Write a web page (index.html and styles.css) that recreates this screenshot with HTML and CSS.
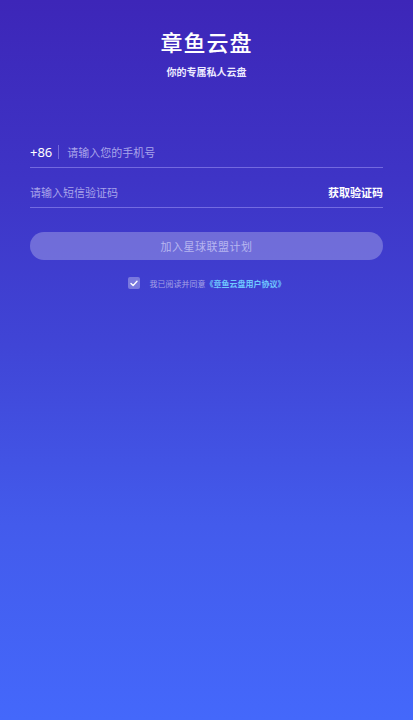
FILE: index.html
```html
<!DOCTYPE html>
<html lang="zh">
<head>
<meta charset="utf-8">
<link rel="stylesheet" href="styles.css">
</head>
<body>
<div class="page">
  <h1 class="title">章鱼云盘</h1>
  <p class="subtitle">你的专属私人云盘</p>
  <div class="form">
    <div class="row">
      <span class="code">+86</span>
      <span class="sep"></span>
      <span class="ph">请输入您的手机号</span>
    </div>
    <div class="row row2">
      <span class="ph">请输入短信验证码</span>
      <span class="get">获取验证码</span>
    </div>
    <div class="btn">加入星球联盟计划</div>
    <div class="agree">
      <span class="check"><svg width="8" height="7" viewBox="0 0 8 7"><path d="M1 3.6 L3.1 5.6 L7 1.2" fill="none" stroke="#ffffff" stroke-width="1.4" stroke-linecap="round" stroke-linejoin="round"/></svg></span>
      <span class="agree-text">我已阅读并同意</span><span class="link">《章鱼云盘用户协议》</span>
    </div>
  </div>
</div>
</body>
</html>
```
FILE: styles.css
```css
html, body {
  margin: 0;
  padding: 0;
}
body {
  width: 413px;
  height: 720px;
  overflow: hidden;
  font-family: "Noto Sans CJK SC", "Noto Sans", sans-serif;
  background: linear-gradient(180deg, #3d26b8 0%, #3e34c6 25%, #4045d6 48%, #435bec 73%, #4468fb 100%);
  color: #ffffff;
}
.page {
  display: flex;
  flex-direction: column;
  align-items: center;
  padding-top: 26px;
}
.title {
  margin: 0;
  font-size: 22px;
  line-height: 30px;
  font-weight: 500;
  letter-spacing: 1px;
}
.subtitle {
  margin: 9px 0 0;
  font-size: 10px;
  line-height: 14px;
  font-weight: 700;
  color: #eceaff;
}
.form {
  width: 353px;
  margin-top: 49px;
  display: flex;
  flex-direction: column;
}
.row {
  display: flex;
  align-items: center;
  height: 31px;
  padding-top: 8px;
  border-bottom: 1px solid rgba(180, 170, 255, 0.45);
}
.row2 {
  justify-content: space-between;
}
.code {
  font-size: 13px;
  color: #ffffff;
  font-family: "Noto Sans", sans-serif;
}
.sep {
  width: 1px;
  height: 14px;
  background: rgba(170, 160, 240, 0.5);
  margin: 0 8px 0 6px;
}
.ph {
  font-size: 11px;
  color: #a9a4ea;
}
.get {
  font-size: 11px;
  font-weight: 700;
  color: #ffffff;
}
.btn {
  margin-top: 24px;
  height: 28px;
  border-radius: 14px;
  background: rgba(255, 255, 255, 0.26);
  display: flex;
  align-items: center;
  justify-content: center;
  font-size: 11px;
  color: #b7b6f0;
  letter-spacing: 0.5px;
}
.agree {
  margin-top: 17px;
  height: 12px;
  display: flex;
  align-items: center;
  justify-content: center;
  font-size: 8px;
}
.check {
  width: 12px;
  height: 12px;
  border-radius: 2px;
  background: rgba(255, 255, 255, 0.3);
  display: flex;
  align-items: center;
  justify-content: center;
  margin-right: 10px;
}
.agree-text {
  color: #a7a2e6;
}
.link {
  color: #6fc8ff;
  font-weight: 700;
}
```
